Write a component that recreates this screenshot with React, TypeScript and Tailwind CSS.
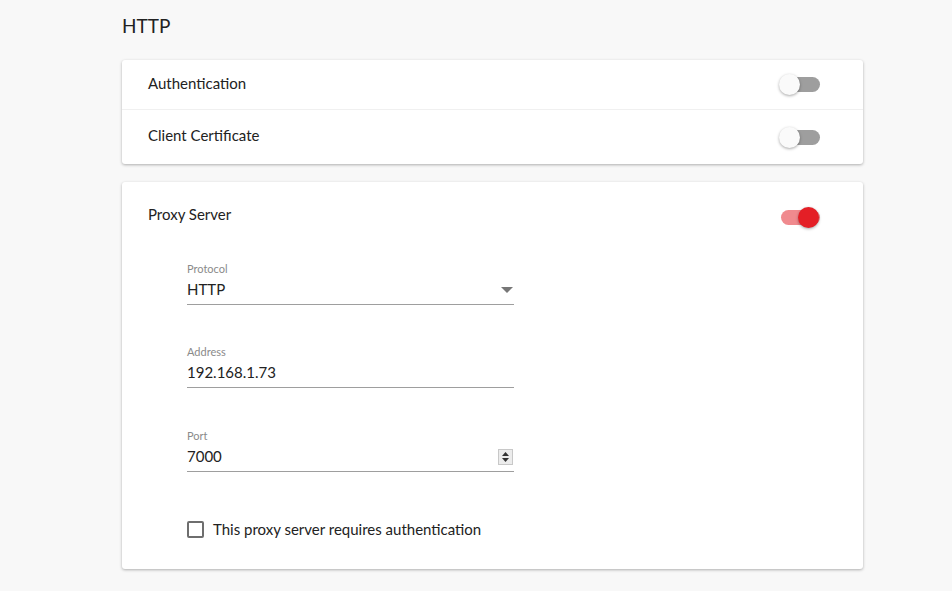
import React from 'react';

function Toggle({ on }: { on?: boolean }) {
  return (
    <div className="relative w-[42px] h-[22px] flex items-center">
      <div
        className={`absolute left-[2px] right-[1px] h-[15px] rounded-full ${on ? 'bg-[#f08a8e]' : 'bg-[#9e9e9e]'}`}
      />
      <div
        className={`absolute w-[21px] h-[21px] rounded-full shadow-[0_1px_3px_rgba(0,0,0,0.35)] ${on ? 'left-[19px] bg-[#e41f26]' : 'left-0 bg-[#fafafa]'}`}
      />
    </div>
  );
}

function Field({ label, value, className, children }: { label: string; value: string; className?: string; children?: React.ReactNode }) {
  return (
    <div className={`w-[327px] ${className ?? ''}`}>
      <div className="text-[11px] leading-[14px] text-[#8a8a8a]">{label}</div>
      <div className="flex items-center justify-between h-[29px] pb-[1px] border-b border-[#9e9e9e] text-[15px] text-[#222]">
        <span>{value}</span>
        {children}
      </div>
    </div>
  );
}

export default function App() {
  return (
    <div className="w-[952px] h-[591px] bg-[#f8f8f8] pl-[122px] pt-[13px] font-['Lato','Liberation_Sans',sans-serif] text-[#222] overflow-hidden">
      <h1 className="text-[19px] leading-[26px] mb-[21px]">HTTP</h1>
      <div className="w-[741px] bg-white rounded-[3px] shadow-[0_1px_3px_rgba(0,0,0,0.3)]">
        <div className="flex items-center justify-between h-[50px] pl-[26px] pr-[42px] border-b border-[#f0f0f0]">
          <span className="text-[15px] mb-[2px]">Authentication</span>
          <Toggle />
        </div>
        <div className="flex items-center justify-between h-[54px] pl-[26px] pr-[42px]">
          <span className="text-[15px] mb-[4px]">Client Certificate</span>
          <Toggle />
        </div>
      </div>
      <div className="w-[741px] mt-[18px] bg-white rounded-[3px] shadow-[0_1px_3px_rgba(0,0,0,0.3)] pb-[28px]">
        <div className="flex items-center justify-between h-[68px] pt-[2px] pl-[26px] pr-[42px]">
          <span className="text-[15px] mb-[6px]">Proxy Server</span>
          <Toggle on />
        </div>
        <div className="pl-[65px] flex flex-col gap-[40px] pt-[12px]">
          <Field label="Protocol" value="HTTP">
            <svg width="12" height="6" viewBox="0 0 12 6" className="mr-[1px]">
              <path d="M0 0h12L6 6z" fill="#777" />
            </svg>
          </Field>
          <Field label="Address" value="192.168.1.73" />
          <Field label="Port" value="7000" className="mt-[1px]">
            <div className="w-[15px] h-[16px] border border-[#c8c8c8] bg-[#ececec] flex flex-col items-center justify-center gap-[2px] mr-[1px]">
              <svg width="7" height="4" viewBox="0 0 7 4"><path d="M0 4h7L3.5 0z" fill="#333" /></svg>
              <svg width="7" height="4" viewBox="0 0 7 4"><path d="M0 0h7L3.5 4z" fill="#333" /></svg>
            </div>
          </Field>
        </div>
        <div className="pl-[65px] mt-[46px] flex items-center gap-[9px]">
          <div className="w-[17px] h-[17px] border-2 border-[#6e6e6e] rounded-[2px]" />
          <span className="text-[15px]">This proxy server requires authentication</span>
        </div>
      </div>
    </div>
  );
}
